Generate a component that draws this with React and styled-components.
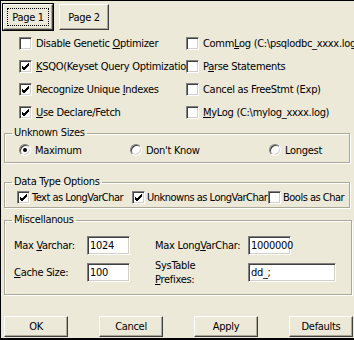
import React from 'react';
import styled, { createGlobalStyle } from 'styled-components';

const GlobalStyle = createGlobalStyle`
  html, body {
    margin: 0;
    padding: 0;
    background: #ece9d8;
  }
  * {
    box-sizing: border-box;
  }
`;

const Window = styled.div`
  width: 354px;
  height: 340px;
  background: #ece9d8;
  border-left: 1px solid #000;
  border-top: 1px solid #000;
  border-bottom: 2px solid #000;
  display: flex;
  flex-direction: column;
  overflow: hidden;
  font-family: "DejaVu Sans Condensed", "Liberation Sans", sans-serif;
  font-size: 11px;
  letter-spacing: -0.3px;
  color: #000;
`;

const TabRow = styled.div`
  display: flex;
  gap: 6px;
  padding: 3px 0 0 2px;
`;

const Button = styled.button`
  position: relative;
  width: ${(p) => p.$w || 64}px;
  height: ${(p) => p.$h || 21}px;
  padding: 0;
  background: #ece9d8;
  font: inherit;
  letter-spacing: inherit;
  color: #000;
  border: 1px solid;
  border-color: #fff #404040 #404040 #fff;
  box-shadow: inset -1px -1px 0 #aca899;
  outline: ${(p) => (p.$default ? '1px solid #000' : 'none')};
  outline-offset: 0;
  cursor: default;

  &::after {
    content: '';
    display: ${(p) => (p.$focus ? 'block' : 'none')};
    position: absolute;
    inset: 3px;
    border: 1px dotted #000;
  }
`;

const CheckGrid = styled.div`
  display: grid;
  grid-template-columns: 167px 1fr;
  grid-auto-rows: 23px;
  padding: 2px 0 0 18px;
`;

const Option = styled.label`
  display: flex;
  align-items: center;
  gap: ${(p) => (p.$tight ? 2 : 4)}px;
  white-space: nowrap;
  overflow: ${(p) => (p.$tight ? 'visible' : 'hidden')};
  letter-spacing: ${(p) => (p.$tight ? '-0.5px' : 'inherit')};
  min-width: 0;
`;

const Text = styled.span`
  white-space: nowrap;
`;

const Box = styled.span`
  flex: none;
  position: relative;
  width: 13px;
  height: 13px;
  background: #fff;
  border: 1px solid;
  border-color: #808080 #fff #fff #808080;
  box-shadow: inset 1px 1px 0 #404040, inset -1px -1px 0 #d4d0c8;
  display: flex;
  align-items: center;
  justify-content: center;
`;

const Radio = styled.span`
  flex: none;
  width: 12px;
  height: 12px;
  border-radius: 50%;
  background: #fff;
  border: 1px solid;
  border-color: #808080 #fff #fff #808080;
  box-shadow: inset 1px 1px 0 #404040, inset -1px -1px 0 #d4d0c8;
  display: flex;
  align-items: center;
  justify-content: center;

  &::after {
    content: '';
    display: ${(p) => (p.$on ? 'block' : 'none')};
    width: 4px;
    height: 4px;
    border-radius: 50%;
    background: #000;
  }
`;

const U = styled.span`
  text-decoration: underline;
  text-underline-offset: 1px;
`;

const Group = styled.fieldset`
  margin: ${(p) => p.$top}px 0 0 3px;
  width: ${(p) => p.$w}px;
  height: ${(p) => p.$h}px;
  padding: 0;
  border: 1px solid #aca899;
  box-shadow: 1px 1px 0 #fff, inset 1px 1px 0 #fff;
  min-width: 0;
`;

const Legend = styled.legend`
  margin-left: 7px;
  padding: 0 2px;
  line-height: 14px;
`;

const RowGrid = styled.div`
  display: grid;
  grid-template-columns: ${(p) => p.$cols};
  align-items: center;
  height: ${(p) => p.$h}px;
  padding-left: ${(p) => p.$pl}px;
`;

const MiscGrid = styled.div`
  display: grid;
  grid-template-columns: 73px 43px 25px 93px auto;
  grid-template-rows: 19px 19px;
  row-gap: 8px;
  align-items: center;
  padding: 9px 0 0 9px;
`;

const FieldLabel = styled.span`
  line-height: 14px;
  white-space: pre;
`;

const Input = styled.div`
  width: ${(p) => p.$w}px;
  height: 19px;
  background: #fff;
  border: 1px solid;
  border-color: #808080 #fff #fff #808080;
  box-shadow: inset 1px 1px 0 #404040, inset -1px -1px 0 #d4d0c8;
  padding: 2px 0 0 2px;
  line-height: 14px;
`;

const Footer = styled.div`
  display: flex;
  gap: 31px;
  margin-top: 21px;
  padding-left: 3px;
`;

const Check = ({ on }) => (
  <Box>
    {on && (
      <svg width="9" height="9" viewBox="0 0 9 9">
        <path d="M1 4 L3 6 L8 1 M1 5 L3 7 L8 2 M1 6 L3 8 L8 3" stroke="#000" strokeWidth="1" fill="none" />
      </svg>
    )}
  </Box>
);

const App = () => (
  <Window>
    <GlobalStyle />
    <TabRow>
      <Button $w={50} $h={26} $default $focus>Page 1</Button>
      <Button $w={50} $h={26}>Page 2</Button>
    </TabRow>

    <CheckGrid>
      <Option><Check /><Text>Disable Genetic <U>O</U>ptimizer</Text></Option>
      <Option><Check /><Text>Comm<U>L</U>og (C:\psqlodbc_xxxx.log)</Text></Option>
      <Option><Check on /><Text><U>K</U>SQO(Keyset Query Optimization)</Text></Option>
      <Option><Check /><Text>P<U>a</U>rse Statements</Text></Option>
      <Option><Check on /><Text>Recognize Unique <U>I</U>ndexes</Text></Option>
      <Option><Check /><Text>Cancel as FreeStmt (Exp)</Text></Option>
      <Option><Check on /><Text><U>U</U>se Declare/Fetch</Text></Option>
      <Option><Check /><Text><U>M</U>yLog (C:\mylog_xxxx.log)</Text></Option>
    </CheckGrid>

    <Group $top={2} $w={346} $h={37}>
      <Legend>Unknown Sizes</Legend>
      <RowGrid $cols="111px 139px 1fr" $h={20} $pl={14}>
        <Option><Radio $on /><Text>Maximum</Text></Option>
        <Option><Radio /><Text>Don't Know</Text></Option>
        <Option><Radio /><Text>Longest</Text></Option>
      </RowGrid>
    </Group>

    <Group $top={12} $w={346} $h={33}>
      <Legend>Data Type Options</Legend>
      <RowGrid $cols="115px 136px 1fr" $h={16} $pl={12}>
        <Option $tight><Check on /><Text>Text as LongVarChar</Text></Option>
        <Option $tight><Check on /><Text>Unknowns as LongVarChar</Text></Option>
        <Option $tight><Check /><Text>Bools as Char</Text></Option>
      </RowGrid>
    </Group>

    <Group $top={5} $w={348} $h={82}>
      <Legend>Miscellanous</Legend>
      <MiscGrid>
        <FieldLabel>Max <U>V</U>archar:</FieldLabel>
        <Input $w={43}>1024</Input>
        <span />
        <FieldLabel>Max Long<U>V</U>arChar:</FieldLabel>
        <Input $w={43}>1000000</Input>
        <FieldLabel><U>C</U>ache Size:</FieldLabel>
        <Input $w={43}>100</Input>
        <span />
        <FieldLabel>SysTable{'\n'}<U>P</U>refixes:</FieldLabel>
        <Input $w={88}>dd_;</Input>
      </MiscGrid>
    </Group>

    <Footer>
      <Button>OK</Button>
      <Button>Cancel</Button>
      <Button>Apply</Button>
      <Button>Defaults</Button>
    </Footer>
  </Window>
);

export default App;
